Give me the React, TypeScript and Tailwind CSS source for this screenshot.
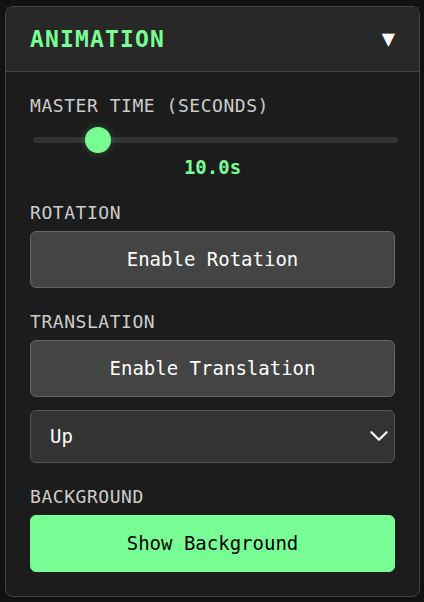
import { useState, type ReactNode } from "react";

const labelClass = "mb-2 block text-lg leading-5 tracking-[0.03em] text-[#cccccc] uppercase";
const buttonClass =
  "block h-[57px] w-full cursor-pointer rounded-md border pb-[2px] text-[19px] leading-6";
const greyButton = "border-[#666666] bg-[#444444] text-white";
const greenButton = "border-[#78fd95] bg-[#78fd95] text-black";

function Group({ label, htmlFor, children }: { label: string; htmlFor: string; children: ReactNode }) {
  return (
    <div>
      <label htmlFor={htmlFor} className={labelClass}>
        {label}
      </label>
      {children}
    </div>
  );
}

export default function App() {
  const [open, setOpen] = useState(true);
  const [time, setTime] = useState(10);
  const [rotation, setRotation] = useState(false);
  const [translation, setTranslation] = useState(false);
  const [background, setBackground] = useState(true);

  return (
    <main className="min-h-screen bg-[#121212] pt-[6px] pr-1 pb-[5px] pl-[5px] font-['DejaVu_Sans_Mono',monospace]">
      <section className="rounded-lg border border-[#444444] bg-[#1c1c1c]">
        <h2 className="border-b border-[#444444] bg-[#282828]">
          <button
            type="button"
            aria-expanded={open}
            onClick={() => setOpen(!open)}
            className="flex h-16 w-full cursor-pointer items-center justify-between px-6"
          >
            <span className="text-[23px] leading-7 font-bold tracking-wider text-[#78fd95] uppercase">
              Animation
            </span>
            <span className="text-[22px] leading-7 text-white">{open ? "▼" : "▶"}</span>
          </button>
        </h2>
        {open && (
          <div className="flex flex-col gap-6 p-6">
            <Group label="Master Time (seconds)" htmlFor="time">
              <input
                id="time"
                type="range"
                min={1}
                max={60}
                value={time}
                onChange={(e) => setTime(Number(e.target.value))}
                className="mx-[3px] block h-8 w-full cursor-pointer appearance-none bg-transparent [&::-webkit-slider-runnable-track]:h-[6px] [&::-webkit-slider-runnable-track]:rounded-full [&::-webkit-slider-runnable-track]:bg-[#333333] [&::-webkit-slider-thumb]:-mt-[10px] [&::-webkit-slider-thumb]:size-[26px] [&::-webkit-slider-thumb]:appearance-none [&::-webkit-slider-thumb]:rounded-full [&::-webkit-slider-thumb]:bg-[#78fd95] [&::-webkit-slider-thumb]:shadow-[0_0_8px_rgba(120,253,149,0.25)]"
              />
              <output htmlFor="time" className="block text-center text-[19px] leading-[23px] font-bold text-[#78fd95]">
                {time.toFixed(1)}s
              </output>
            </Group>
            <Group label="Rotation" htmlFor="rotation">
              <button
                id="rotation"
                type="button"
                onClick={() => setRotation(!rotation)}
                className={`${buttonClass} ${rotation ? greenButton : greyButton}`}
              >
                Enable Rotation
              </button>
            </Group>
            <Group label="Translation" htmlFor="translation">
              <button
                id="translation"
                type="button"
                onClick={() => setTranslation(!translation)}
                className={`${buttonClass} ${translation ? greenButton : greyButton}`}
              >
                Enable Translation
              </button>
              <div className="mt-[13px] grid items-center">
                <select
                  aria-label="Translation direction"
                  className="col-start-1 row-start-1 h-[53px] w-full cursor-pointer appearance-none rounded-md border border-[#555555] bg-[#333333] pr-10 pb-[2px] pl-[19px] text-[19px] leading-6 text-white"
                >
                  <option>Up</option>
                  <option>Down</option>
                  <option>Left</option>
                  <option>Right</option>
                </select>
                <svg
                  aria-hidden="true"
                  viewBox="0 0 18 11"
                  className="pointer-events-none col-start-1 row-start-1 mr-[7px] h-[11px] w-[18px] justify-self-end"
                  fill="none"
                  stroke="white"
                  strokeWidth="2.2"
                  strokeLinecap="round"
                  strokeLinejoin="round"
                >
                  <path d="M1.4 1.2l7.6 7.6 7.6-7.6" />
                </svg>
              </div>
            </Group>
            <Group label="Background" htmlFor="background">
              <button
                id="background"
                type="button"
                onClick={() => setBackground(!background)}
                className={`${buttonClass} ${background ? greenButton : greyButton}`}
              >
                Show Background
              </button>
            </Group>
          </div>
        )}
      </section>
    </main>
  );
}
